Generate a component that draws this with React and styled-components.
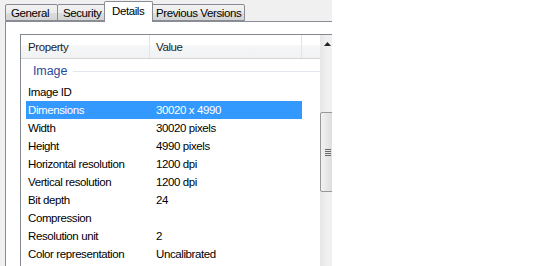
import React from 'react'
import styled, { createGlobalStyle } from 'styled-components'

const GlobalStyle = createGlobalStyle`
  html, body {
    margin: 0;
    padding: 0;
    background: #ffffff;
  }
  body {
    font-family: "Liberation Sans", Arial, sans-serif;
    font-size: 11.5px;
    letter-spacing: -0.4px;
    color: #000;
  }
`

const Page = styled.div`
  width: 543px;
  height: 266px;
  display: flex;
  overflow: hidden;
  background: #ffffff;
`

const Dialog = styled.div`
  width: 332px;
  height: 266px;
  flex: none;
  overflow: hidden;
  background: #f0f0f0;
  display: flex;
  flex-direction: column;
`

const TabStrip = styled.div`
  height: 21px;
  flex: none;
  display: flex;
  align-items: flex-end;
  padding-left: 5px;
`

const Tab = styled.div`
  box-sizing: border-box;
  width: ${p => p.w}px;
  height: ${p => (p.active ? 21 : 17)}px;
  margin-left: ${p => (p.first ? 0 : p.active ? -2 : -1)}px;
  margin-right: ${p => (p.active ? -2 : 0)}px;
  margin-bottom: ${p => (p.active ? -1 : 0)}px;
  position: relative;
  z-index: ${p => (p.active ? 2 : 1)};
  border: 1px solid #898c95;
  border-bottom: ${p => (p.active ? 'none' : '1px solid #898c95')};
  border-radius: 2px 2px 0 0;
  background: ${p =>
    p.active
      ? '#ffffff'
      : 'linear-gradient(to bottom, #f2f2f2 0%, #ebebeb 50%, #dddddd 51%, #d4d4d4 100%)'};
  display: flex;
  align-items: ${p => (p.active ? 'flex-start' : 'center')};
  padding-top: ${p => (p.active ? 2 : 0)}px;
  padding-left: ${p => (p.active ? 7 : 5)}px;
  white-space: nowrap;
  color: #000;
  line-height: 14px;
`

const Panel = styled.div`
  flex: 1;
  margin-left: 5px;
  border-top: 1px solid #898c95;
  border-left: 1px solid #898c95;
  background: #ffffff;
  padding: 12px 0 0 14px;
  position: relative;
  z-index: 1;
`

const ListView = styled.div`
  width: 318px;
  height: 240px;
  border: 1px solid #828790;
  display: flex;
  background: #ffffff;
`

const ListBody = styled.div`
  width: 299px;
  flex: none;
  display: flex;
  flex-direction: column;
`

const Header = styled.div`
  height: 23px;
  border-bottom: 1px solid #d5d5d5;
  display: flex;
  background: linear-gradient(to bottom, #ffffff 0%, #ffffff 45%, #f5f6f7 46%, #f1f2f4 100%);
`

const HeaderCell = styled.div`
  box-sizing: border-box;
  width: ${p => p.w}px;
  padding-left: ${p => p.pad}px;
  border-right: 1px solid ${p => (p.sep ? '#e3e4e6' : 'transparent')};
  display: flex;
  align-items: center;
  color: #1e1e1e;
`

const GroupHeader = styled.div`
  height: 24px;
  display: flex;
  align-items: center;
  margin: 0 -10px 0 12px;
  color: #2a4a9c;
  font-size: 12.5px;
  letter-spacing: -0.1px;
`

const GroupLine = styled.div`
  flex: 1;
  height: 1px;
  margin-left: 6px;
  margin-top: 1px;
  background: #e2e7ef;
`

const Row = styled.div`
  height: 18px;
  width: 276px;
  margin-left: 5px;
  display: flex;
  align-items: center;
  background: ${p => (p.selected ? '#3399ff' : 'transparent')};
  color: ${p => (p.selected ? '#ffffff' : '#000000')};
`

const Cell = styled.div`
  box-sizing: border-box;
  width: ${p => p.w}px;
  padding-left: ${p => p.pad}px;
  white-space: nowrap;
`

const ScrollBar = styled.div`
  width: 17px;
  flex: none;
  background: linear-gradient(to right, #e6e6e6 0%, #f0f0f0 40%, #f0f0f0 100%);
  display: flex;
  flex-direction: column;
  align-items: center;
`

const ArrowButton = styled.div`
  width: 17px;
  height: 17px;
  display: flex;
  align-items: center;
  justify-content: center;
  padding-right: 2px;
  box-sizing: border-box;
`

const Thumb = styled.div`
  box-sizing: border-box;
  width: 17px;
  height: 80px;
  margin-top: 60px;
  border: 1px solid #979797;
  border-radius: 2px;
  background: linear-gradient(to right, #f2f2f2 0%, #e4e4e4 50%, #d6d6d6 100%);
  display: flex;
  flex-direction: column;
  align-items: flex-start;
  justify-content: center;
  gap: 1px;
  padding-left: 4px;
`

const Grip = styled.div`
  width: 6px;
  height: 1px;
  background: #6a6a6a;
`

const Blank = styled.div`
  flex: 1;
  background: #ffffff;
`

const tabs = [
  { label: 'General', w: 53 },
  { label: 'Security', w: 49 },
  { label: 'Details', w: 49, active: true },
  { label: 'Previous Versions', w: 95 },
]

const rows = [
  ['Image ID', ''],
  ['Dimensions', '30020 x 4990', true],
  ['Width', '30020 pixels'],
  ['Height', '4990 pixels'],
  ['Horizontal resolution', '1200 dpi'],
  ['Vertical resolution', '1200 dpi'],
  ['Bit depth', '24'],
  ['Compression', ''],
  ['Resolution unit', '2'],
  ['Color representation', 'Uncalibrated'],
]

export default function App() {
  return (
    <>
      <GlobalStyle />
      <Page>
        <Dialog>
          <TabStrip>
            {tabs.map((t, i) => (
              <Tab key={t.label} w={t.w} active={t.active} first={i === 0}>
                {t.label}
              </Tab>
            ))}
          </TabStrip>
          <Panel>
            <ListView>
              <ListBody>
                <Header>
                  <HeaderCell w={129} pad={7} sep>Property</HeaderCell>
                  <HeaderCell w={152} pad={6} sep>Value</HeaderCell>
                  <HeaderCell w={18} pad={0} />
                </Header>
                <GroupHeader>
                  Image
                  <GroupLine />
                </GroupHeader>
                {rows.map(([name, value, sel]) => (
                  <Row key={name} selected={sel}>
                    <Cell w={124} pad={2}>{name}</Cell>
                    <Cell w={152} pad={6}>{value}</Cell>
                  </Row>
                ))}
              </ListBody>
              <ScrollBar>
                <ArrowButton>
                  <svg width="7" height="4" viewBox="0 0 7 4">
                    <path d="M0 4 L3.5 0 L7 4 Z" fill="#222" />
                  </svg>
                </ArrowButton>
                <Thumb>
                  <Grip />
                  <Grip />
                  <Grip />
                  <Grip />
                </Thumb>
              </ScrollBar>
            </ListView>
          </Panel>
        </Dialog>
        <Blank />
      </Page>
    </>
  )
}
